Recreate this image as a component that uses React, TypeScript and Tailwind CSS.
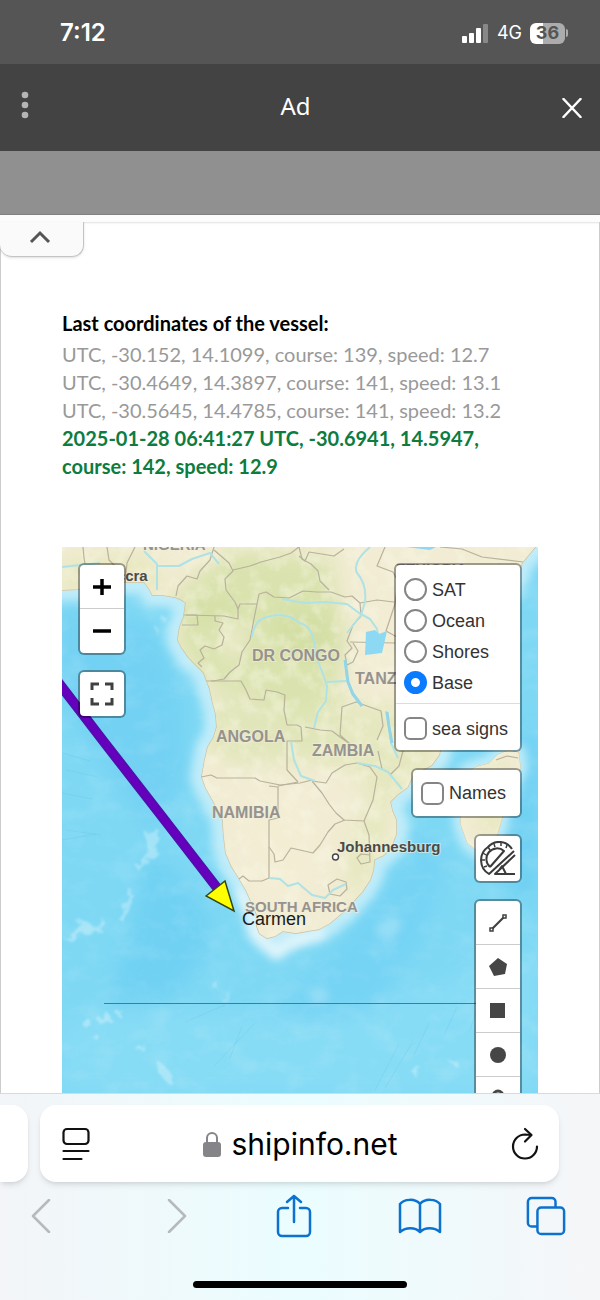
import React, { useState } from 'react';

interface VesselFix {
  time: string;
  lat: string;
  lon: string;
  course: number;
  speed: string;
}

const fixes: VesselFix[] = [
  { time: 'UTC', lat: '-30.152', lon: '14.1099', course: 139, speed: '12.7' },
  { time: 'UTC', lat: '-30.4649', lon: '14.3897', course: 141, speed: '13.1' },
  { time: 'UTC', lat: '-30.5645', lon: '14.4785', course: 141, speed: '13.2' },
  { time: '2025-01-28 06:41:27 UTC', lat: '-30.6941', lon: '14.5947', course: 142, speed: '12.9' },
];

const formatFix = (f: VesselFix) => `${f.time}, ${f.lat}, ${f.lon}, course: ${f.course}, speed: ${f.speed}`;

const baseLayers = ['SAT', 'Ocean', 'Shores', 'Base'];

const AFRICA =
  'M55 540 L55 591 L78 590 L100 586 L125 583 L144 583 L149 590 L152 596 L163 596 L175 598 L180 600 L185 603 L184 610 L183 617 L179 627 L177 640 L181 648 L188 658 L196 666 L203 673 L206 681 L209 689 L212 703 L215 714 L216 727 L213 737 L207 747 L204 760 L201 777 L205 788 L210 797 L216 808 L222 820 L223 836 L225 853 L231 867 L238 878 L245 890 L251 903 L257 917 L256 926 L259 934 L267 939 L275 937 L283 932 L296 934 L307 932 L319 930 L330 924 L342 914 L353 903 L363 892 L371 880 L374 870 L375 860 L384 856 L392 848 L397 834 L397 820 L393 811 L391 802 L398 795 L408 788 L414 775 L432 766 L440 755 L444 730 L440 710 L455 680 L490 630 L515 580 L523 563 L542 540 Z';
const MADAGASCAR =
  'M466 772 L477 766 L489 763 L498 754 L508 750 L519 752 L521 768 L514 782 L506 805 L501 824 L496 840 L487 850 L475 850 L467 843 L460 824 L462 800 Z';

const borders = [
  'M83 547 L84 558 L87 575 L88 589', 'M107 547 L109 560 L115 566 L117 583', 'M135 547 L127 563 L125 583',
  'M214 547 L210 560 L200 571 L197 579 L187 576 L178 586 L176 596',
  'M214 550 L221 556 L229 563 L233 571 L225 579 L226 590 L235 602 L238 609 L238 619 L224 616 L186 615',
  'M233 570 L250 566 L261 562 L280 557 L291 553 L299 547',
  'M238 609 L240 604 L257 604 L259 594 L266 592 L274 597 L289 598 L303 591 L317 592 L331 592 L345 597 L352 596 L360 603 L361 615',
  'M299 547 L302 559 L311 564 L318 571 L320 581 L329 590', 'M299 556 L305 561 L309 552 L334 556 L344 549',
  'M257 604 L254 619 L250 640 L242 652 L239 665 L230 672 L224 679 L213 681 L205 681',
  'M184 615 L197 615 L198 625 L182 625', 'M215 616 L215 621 L223 623 L219 630 L224 637 L222 645 L214 649 L205 646 L200 650 L204 658 L198 663 L202 667',
  'M211 681 L241 681 L246 690 L250 699 L264 700 L266 690 L277 692 L285 695 L284 710 L287 725 L297 725 L301 727 L302 741 L287 741 L287 770 L298 782',
  'M201 777 L211 775 L217 778 L255 778 L260 781 L280 785 L300 783 L312 780',
  'M269 786 L278 787 L278 818 L269 820 L269 878 M278 786 L298 782',
  'M312 781 L326 783 L332 773 L345 765 L357 763 L370 767 L377 777 L373 800 L364 821 L344 820 L336 813 L329 804 L322 793 L312 781',
  'M269 847 L274 854 L275 862 L283 860 L291 848 L313 853 L320 845 L328 832 L335 824 L345 820',
  'M239 879 L243 876 L249 881 L262 881 L269 878', 'M364 821 L369 835 L370 862 L361 864 L357 858 L361 854 L370 855',
  'M328 885 L337 879 L346 882 L347 889 L340 896 L330 894 Z', 'M305 727 L320 730 L332 731 L340 737 L350 744 L340 735 L342 707 L356 702 L367 706 L381 711 L383 726 L377 740',
  'M360 603 L377 600 L394 602 M361 616 L353 625 L347 641 L352 648 L345 655 L347 665 L353 662 L358 651 L353 643 M350 642 L395 643',
  'M385 547 L377 566 L393 572 L398 581 L395 604 L386 631 L397 637',
  'M440 547 L462 549 L482 557 L523 562', 'M496 760 L507 756 L518 758', 'M403 751 L399 766 L391 774 L382 769 L378 751',
];

const rivers = [
  'M62 567 L100 563 M144 551 L157 564 L157 590 M157 566 L179 566 L192 559 L210 553 L219 564',
  'M370 547 Q352 562 357 573 Q367 584 365 602 L361 615 L347 633',
  'M282 599 L305 603 L325 602 L347 604 L359 613 L370 619 L377 629 L379 640',
  'M252 637 Q254 620 267 617 Q285 611 300 623 Q315 627 315 654 L323 674 L327 686 L326 701 L318 712 L314 728 M327 682 L346 681',
  'M345 660 L347 679 L352 694 L362 706', 'M291 741 L294 760 L301 776 L315 781 M357 763 L375 766 L388 772 L402 789',
  'M269 878 L280 879 L288 886 L298 883 L312 895 L325 898 L333 890 L346 884', 'M386 711 L389 725 L391 743 L398 758',
];

const BaseMap: React.FC = () => (
  <svg viewBox="62 547 476 546" preserveAspectRatio="xMidYMin slice" className="absolute inset-0 h-full w-full" role="img" aria-label="Map of southern Africa">
    <defs>
      <clipPath id="land"><path d={AFRICA} /><path d={MADAGASCAR} /></clipPath>
      <filter id="soft" x="-30%" y="-30%" width="160%" height="160%"><feGaussianBlur stdDeviation="10" /></filter>
      <filter id="shelf" x="-20%" y="-20%" width="140%" height="140%"><feGaussianBlur stdDeviation="5" /></filter>
      <filter id="mount" x="-20%" y="-20%" width="140%" height="140%">
        <feTurbulence type="fractalNoise" baseFrequency="0.12" numOctaves="3" seed="5" result="n" />
        <feDisplacementMap in="SourceGraphic" in2="n" scale="12" />
        <feGaussianBlur stdDeviation="1" />
      </filter>
      <filter id="relief" x="0" y="0" width="100%" height="100%">
        <feTurbulence type="fractalNoise" baseFrequency="0.035 0.05" numOctaves="4" seed="8" />
        <feColorMatrix values="0 0 0 0 1  0 0 0 0 1  0 0 0 0 1  2.4 0 0 0 -1.1" />
      </filter>
      <filter id="veg" x="0" y="0" width="100%" height="100%">
        <feTurbulence type="fractalNoise" baseFrequency="0.06" numOctaves="4" seed="3" />
        <feColorMatrix values="0 0 0 0 .95  0 0 0 0 .94  0 0 0 0 .80  3 0 0 0 -1.3" />
      </filter>
    </defs>
    <rect x="62" y="547" width="476" height="546" fill="#7ed8f4" />
    <g filter="url(#soft)">
      <path d="M62 610 L150 625 L180 690 L185 780 L150 830 L62 700 Z" fill="#73d1f3" />
      <path d="M150 850 L205 900 L210 950 L170 1000 L110 1000 L130 930 Z" fill="#71d1f3" />
      <path d="M300 990 L395 880 L425 830 L445 860 L420 940 L350 1040 L250 1060 Z" fill="#74d3f4" />
      <path d="M62 1020 L190 1010 L330 1020 L538 950 L538 1093 L62 1093 Z" fill="#87dcf5" />
      <path d="M500 760 L538 720 L538 900 L510 900 Z" fill="#70d0f3" />
    </g>
    <g filter="url(#shelf)" stroke="#bfecf9" strokeLinejoin="round" fill="none">
      <path d={AFRICA} strokeWidth="22" /><path d={MADAGASCAR} strokeWidth="14" />
      <path d="M238 890 L262 942 L276 954 L292 943 L325 934" strokeWidth="12" stroke="#e0f5fb" />
    </g>
    <rect x="62" y="547" width="476" height="546" filter="url(#relief)" opacity=".1" />
    <g fill="#fff" opacity=".3" filter="url(#mount)">
      <path d="M147 835 l9 -8 l4 12 l-5 18 l-7 5 l-8 10 l-4 -5 l10 -13 Z" />
      <path d="M120 920 l8 -26 l5 -5 l-2 16 l-7 17 Z M64 940 l9 -8 l7 -12 l8 2 l9 8 l7 -11 l2 8 l-10 8 l-12 -3 l-10 8 Z" />
      <path d="M98 1018 l8 -6 l5 4 l-6 7 l-7 0 Z M82 1024 l5 -6 l5 2 l-6 8 Z M90 1036 l6 -4 l0 5 Z M115 1012 l8 -2 l-5 6 Z" />
      <path d="M135 1050 l10 -7 l-3 7 Z M155 1058 l10 8 l10 13 l-7 5 l-8 -10 Z M411 1072 l7 -7 l3 4 l-6 8 Z M450 1063 l7 -2 l3 8 Z" />
      <path d="M210 985 l8 -5 l-3 6 Z M222 1001 l10 -7 l-6 9 Z M161 621 l5 -4 l2 5 Z M152 634 l7 -5 l0 4 Z" />
    </g>
    <path d="M375 925 l16 -8 l12 4 l-5 12 l-18 8 Z M310 990 l14 -4 l6 14 l-16 6 Z" fill="#fff" opacity=".25" filter="url(#shelf)" />
    <g stroke="#60bfe0" strokeOpacity=".25" fill="none">
      <path d="M62 753 l28 8 M66 770 l32 7 M62 793 l30 6 M66 830 l35 5 M62 840 l34 -6 M185 1022 l40 -17 M215 1065 l40 -42 M230 1058 l12 -32 M375 1090 l24 -46 M385 1088 l27 -45 M414 1055 l15 -32 M444 1035 l13 -28 M470 1030 l8 -24" />
    </g>

    <g clipPath="url(#land)">
      <rect x="62" y="547" width="476" height="400" fill="#f1ecd3" />
      <g filter="url(#soft)">
        <path d="M178 590 L230 550 L330 556 L345 640 L330 740 L290 740 L260 700 L200 680 L175 640 Z" fill="#dae3af" />
        <path d="M212 690 L290 715 L350 700 L385 760 L360 770 L300 760 L240 765 L205 750 Z" fill="#e1e6ba" />
        <path d="M325 720 L380 700 L440 720 L430 770 L385 810 L390 850 L350 905 L345 850 L370 800 Z" fill="#e5e8bf" />
        <path d="M62 560 L150 556 L165 590 L62 590 Z M485 770 L510 760 L500 840 L480 840 Z" fill="#e6e7bd" />
        <path d="M270 610 L335 610 L338 660 L280 660 Z M182 600 L240 600 L232 618 L182 618 Z" fill="#d3dfa4" />
      </g>
      <g filter="url(#soft)" fill="#f3edd4">
        <path d="M228 625 L246 625 L238 655 L224 665 Z M360 640 L400 600 L400 690 L375 690 Z M235 800 L310 790 L320 850 L300 910 L250 900 Z" />
      </g>
      <rect x="62" y="547" width="476" height="400" filter="url(#veg)" opacity=".4" />
      <g fill="none" stroke="#b8b19c" strokeWidth="1.2" strokeLinejoin="round">{borders.map(d => <path key={d} d={d} />)}</g>
      <g fill="none" stroke="#aee2e4" strokeWidth="2" strokeLinejoin="round">{rivers.map(d => <path key={d} d={d} />)}</g>
      <path d="M366 632 l9 -2 l4 4 l8 -3 l-2 9 l-3 13 l-17 2 Z M436 547 l-6 3 l-24 -3 Z" fill="#8dd8f2" />
      <path d="M345 660 L348 682 L353 694 L362 706 M387 712 L389 727 L392 743" fill="none" stroke="#93d5e6" strokeWidth="3" />
      <path d={AFRICA} fill="none" stroke="#c6c2a8" strokeWidth="1.4" /><path d={MADAGASCAR} fill="none" stroke="#cbc8a8" />
    </g>

    <path d="M104 1003.500 H476" stroke="#2f84a3" />
    <g className="font-['Liberation_Sans',Arial,sans-serif]" fontWeight="700" fontSize="16" fill="#96938f" stroke="#f3eed8" strokeWidth="2" strokeOpacity=".6" paintOrder="stroke">
      <text x="143" y="550" fontSize="15">NIGERIA</text>
      <text x="396" y="574" fontSize="15">ETHIOPIA</text>
      <text x="252" y="661">DR CONGO</text>
      <text x="355" y="684">TANZANIA</text>
      <text x="216" y="742">ANGOLA</text>
      <text x="312" y="756">ZAMBIA</text>
      <text x="212" y="818">NAMIBIA</text>
      <text x="245" y="912" fontSize="15">SOUTH AFRICA</text>
      <text x="106" y="581" fontSize="15" fill="#4a4a4a">Accra</text>
      <text x="337" y="852" fontSize="15" fill="#4a4a4a">Johannesburg</text>
    </g>
    <circle cx="335.500" cy="857" r="3" fill="#fff" stroke="#444" strokeWidth="1.4" />
    <path d="M58 682 L104 742 L160 814 L218 889" fill="none" stroke="#4d11a8" strokeWidth="10" />
    <path d="M58 682 L104 742 L160 814 L218 889" fill="none" stroke="#6500bd" strokeWidth="7" />
    <path d="M206 896 L225 881 L234 911 Z" fill="#ff0" stroke="#344414" strokeWidth="1.5" />
    <text x="242" y="925" className="font-['Liberation_Sans',Arial,sans-serif]" fontSize="18" fill="#1a1a1a">Carmen</text>
  </svg>
);

const panel = 'overflow-hidden rounded-md border-2 border-black/35 bg-white bg-clip-padding';
const toolButton = 'flex h-11 w-11 items-center justify-center';

const MapControls: React.FC = () => {
  const [layer, setLayer] = useState('Base');
  const [seaSigns, setSeaSigns] = useState(false);
  const [names, setNames] = useState(false);
  const boxClass = 'h-[23px] w-[23px] shrink-0 appearance-none rounded-md border-2 border-[#858585] bg-white checked:bg-[#0a7aff]';

  return (
    <>
      <div className="absolute left-4 top-4 flex flex-col gap-[15px]">
        <div className={panel}>
          <button aria-label="Zoom in" className={`${toolButton} border-b border-[#ccc]`}>
            <svg width="18" height="18" viewBox="0 0 18 18" stroke="#000" strokeWidth="3.500"><path d="M9 1v16M0 9h18" /></svg>
          </button>
          <button aria-label="Zoom out" className={toolButton}>
            <svg width="18" height="18" viewBox="0 0 18 18" stroke="#000" strokeWidth="3.500"><path d="M0 9h18" /></svg>
          </button>
        </div>
        <div className={panel}>
          <button aria-label="Full screen" className={toolButton}>
            <svg width="24" height="24" viewBox="0 0 24 24" fill="none" stroke="#404040" strokeWidth="3"><path d="M2 8V2h7M15 2h7v6M22 16v6h-7M9 22H2v-6" /></svg>
          </button>
        </div>
      </div>

      <div className="absolute right-4 top-4 flex flex-col items-end gap-4 font-['Liberation_Sans',Arial,sans-serif] text-lg text-[#333]">
        <form className={`${panel} w-32 pt-[9px] pb-1.5`}>
          {baseLayers.map(name => (
            <label key={name} className="flex h-[31px] items-center gap-[5px] px-2">
              <input type="radio" name="layer" checked={layer === name} onChange={() => setLayer(name)} className="h-[23px] w-[23px] shrink-0 appearance-none rounded-full border-2 border-[#858585] bg-white checked:border-[7px] checked:border-[#0a7aff]" />
              {name}
            </label>
          ))}
          <div className="mt-[5px] mb-[9px] border-t border-[#ddd]" />
          <label className="flex h-[31px] items-center gap-[5px] px-2 whitespace-nowrap">
            <input type="checkbox" checked={seaSigns} onChange={() => setSeaSigns(!seaSigns)} className={boxClass} />
            sea signs
          </label>
        </form>
        <label className={`${panel} flex h-[50px] items-center gap-[5px] px-2 pr-3.5`}>
          <input type="checkbox" checked={names} onChange={() => setNames(!names)} className={boxClass} />
          Names
        </label>
        <div className={panel}>
          <button aria-label="Measure angle" className="flex h-[45px] w-11 items-center justify-center">
            <svg width="36" height="36" viewBox="0 0 36 36" fill="none" stroke="#3b3b3b" strokeWidth="2" strokeLinejoin="round">
              <path d="M32 8A15 15 0 0 0 8 6A16 16 0 0 0 9 33L34 10" />
              <path d="M10 26A10 10 0 0 1 24 10L10 26" />
              <path d="M2 19h3M3 12l3 2M8 6l2 3M14 3l1 3M21 2v3M27 4l-1 3M4 26l3-1" strokeWidth="1.500" />
              <path d="M35 33H15L35 14M19 29l3-4 4 8" />
            </svg>
          </button>
        </div>
        <div className={panel}>
          <button aria-label="Draw line" className={`${toolButton} border-b border-[#ccc]`}>
            <svg width="18" height="18" viewBox="0 0 18 18" fill="#fff" stroke="#404040"><path d="M3 15L15 3" strokeWidth="2.200" /><path d="M1 14h3v3H1zM14 1h3v3h-3z" strokeWidth="1.500" /></svg>
          </button>
          <button aria-label="Draw polygon" className={`${toolButton} border-b border-[#ccc]`}>
            <svg width="18" height="18" viewBox="0 0 18 18" fill="#464646"><path d="M9 0L18 6L16 16L5 18L0 8Z" /></svg>
          </button>
          <button aria-label="Draw rectangle" className={`${toolButton} border-b border-[#ccc]`}>
            <svg width="16" height="16" viewBox="0 0 16 16" fill="#464646"><path d="M0 0h15v15H0z" /></svg>
          </button>
          <button aria-label="Draw circle" className={`${toolButton} border-b border-[#ccc]`}>
            <svg width="16" height="16" viewBox="0 0 16 16" fill="#464646"><circle cx="8" cy="8" r="8" /></svg>
          </button>
          <button aria-label="Draw marker" className={toolButton}>
            <svg width="16" height="20" viewBox="0 0 16 20" fill="none" stroke="#464646" strokeWidth="2.800"><path d="M8 18C5 13 3 11 3 7a5 5 0 0 1 10 0c0 4-2 6-5 11Z" /></svg>
          </button>
        </div>
      </div>
    </>
  );
};

const StatusBar: React.FC = () => (
  <div className="flex h-16 shrink-0 items-center justify-between bg-[#555] pl-[60px] pr-8 pt-0.5 font-['Inter',sans-serif] text-white">
    <span className="text-2xl font-semibold">7:12</span>
    <div className="flex items-center gap-2">
      <svg width="27" height="19" viewBox="0 0 27 19" fill="#fff">
        <rect x="0" y="12" width="5" height="7" rx="1" /><rect x="7" y="9" width="5" height="10" rx="1" />
        <rect x="14" y="4" width="5" height="15" rx="1" /><rect x="21" y="0" width="5" height="19" rx="1" opacity=".3" />
      </svg>
      <span className="text-lg">4G</span>
      <div className="flex items-center gap-px">
        <span className="flex h-[21px] w-[35px] items-center justify-center rounded-md bg-linear-to-r from-white from-38% to-[#acacac] to-38% text-lg font-bold text-[#555]">36</span>
        <span className="h-2 w-0.5 rounded-r bg-[#acacac]" />
      </div>
    </div>
  </div>
);

const BrowserBar: React.FC = () => (
  <footer className="flex shrink-0 flex-col border-t border-[#d5dcdd] bg-linear-to-r from-[#f3f5f8] via-[#ebfdff] to-[#f5f6f8] pt-[11px] pb-3">
    <div className="flex gap-3 pr-[41px]">
      <div className="h-[77px] w-[28px] shrink-0 rounded-r-2xl bg-white shadow-md" />
      <div className="flex h-[77px] flex-1 items-center justify-between rounded-2xl bg-white pl-[22px] pr-5 shadow-md">
        <button aria-label="Page menu">
          <svg width="28" height="34" viewBox="0 0 28 34" fill="none" stroke="#111" strokeWidth="2.200" strokeLinecap="round"><rect x="1.500" y="2" width="25" height="15" rx="3.500" /><path d="M1.500 24h25M1.500 32h18" /></svg>
        </button>
        <button className="flex items-center gap-2.5 font-['Inter',sans-serif] text-3xl text-black">
          <svg width="18" height="26" viewBox="0 0 18 26"><rect y="11" width="18" height="15" rx="3" fill="#858589" /><path d="M4 12V7a5 5 0 0 1 10 0v5" fill="none" stroke="#858589" strokeWidth="2" /></svg>
          shipinfo.net
        </button>
        <button aria-label="Reload">
          <svg width="28" height="34" viewBox="0 0 28 34" fill="none" stroke="#111" strokeWidth="2.200" strokeLinecap="round" strokeLinejoin="round"><path d="M26 19.500A12 12 0 1 1 14 7.500L20 8" /><path d="M14 2L20.500 8L14 14.500" /></svg>
        </button>
      </div>
    </div>
    <nav className="mt-3 flex items-center justify-between pl-[21px] pr-[34px] text-[#0b72d0]">
      <button aria-label="Back" className="flex w-10 justify-center text-[#b7babd]">
        <svg width="20" height="34" viewBox="0 0 20 34" fill="none" stroke="currentColor" strokeWidth="2.500" strokeLinecap="round" strokeLinejoin="round"><path d="M18 1L2 17l16 16" /></svg>
      </button>
      <button aria-label="Forward" className="flex w-10 justify-end text-[#b7babd]">
        <svg width="20" height="34" viewBox="0 0 20 34" fill="none" stroke="currentColor" strokeWidth="2.500" strokeLinecap="round" strokeLinejoin="round"><path d="M2 1l16 16L2 33" /></svg>
      </button>
      <button aria-label="Share" className="flex w-10 justify-center">
        <svg width="36" height="44" viewBox="0 0 36 44" fill="none" stroke="currentColor" strokeWidth="2.500" strokeLinecap="round" strokeLinejoin="round"><path d="M12 14H6a4 4 0 0 0-4 4v20a4 4 0 0 0 4 4h24a4 4 0 0 0 4-4V18a4 4 0 0 0-4-4h-6M18 28V2M11 8l7-6 7 6" /></svg>
      </button>
      <button aria-label="Bookmarks" className="flex w-10 justify-center">
        <svg width="44" height="36" viewBox="0 0 44 36" className="shrink-0" fill="none" stroke="currentColor" strokeWidth="2.500" strokeLinejoin="round"><path d="M22 6C17 0 6 1 2 6v28c6-5 15-5 20 0 5-5 14-5 20 0V6C38 1 27 0 22 6v28" /></svg>
      </button>
      <button aria-label="Tabs" className="flex w-10 justify-center">
        <svg width="40" height="40" viewBox="-1 -1 42 42" fill="none" stroke="currentColor" strokeWidth="2.600"><rect x="11" y="11" width="28" height="28" rx="4" /><path d="M11 31H5a4 4 0 0 1-4-4V5a4 4 0 0 1 4-4h21a4 4 0 0 1 4 4v6" /></svg>
      </button>
    </nav>
    <div className="mx-auto mt-[43px] h-[7px] w-[214px] rounded-full bg-black" />
  </footer>
);

export default function App() {
  return (
    <div className="flex h-screen flex-col overflow-hidden bg-white">
      <StatusBar />
      <header className="flex h-[87px] shrink-0 items-center justify-between bg-[#434343] pl-[21px] pr-[18px] text-white">
        <button aria-label="More options" className="w-2 pb-1.5">
          <svg width="8" height="28" viewBox="0 0 8 28" fill="#b5b5b5"><circle cx="4" cy="4" r="3.300" /><circle cx="4" cy="14" r="3.300" /><circle cx="4" cy="24" r="3.300" /></svg>
        </button>
        <h1 className="pb-1 font-['Noto_Sans',sans-serif] text-2xl">Ad</h1>
        <button aria-label="Close">
          <svg width="20" height="20" viewBox="0 0 20 20" stroke="#fff" strokeWidth="2.500" strokeLinecap="round"><path d="M1.500 1l17 18M18.500 1l-17 18" /></svg>
        </button>
      </header>
      <div className="h-16 shrink-0 border-b border-[#828282] bg-[#909090]" />

      <div className="h-[7px] shrink-0 bg-[#fcfcfc] shadow-[0_1px_2px_rgba(0,0,0,0.12)]" />
      <main className="flex min-h-0 flex-1 flex-col border-x border-[#ccc]">
        <button aria-label="Collapse ad" className="-ml-px flex h-[35px] w-[84px] shrink-0 items-center justify-center rounded-b-xl border-r border-b border-[#c4c4c4] bg-[#fafafa] pr-1 pb-1 shadow-sm">
          <svg width="22" height="14" viewBox="0 0 22 14" fill="none" stroke="#555" strokeWidth="3"><path d="M2 12L11 3l9 9" /></svg>
        </button>
        <div className="flex min-h-0 flex-1 flex-col px-[61px] pt-[52px]">
          <section className="font-['Lato',sans-serif] text-xl leading-7">
            <h2 className="font-bold text-black">Last coordinates of the vessel:</h2>
            <ul className="mt-[3px] text-[#999]">
              {fixes.map((fix, i) => (
                <li key={fix.lat} className={i === fixes.length - 1 ? 'font-bold text-[#0d7c3f]' : ''}>{formatFix(fix)}</li>
              ))}
            </ul>
          </section>
          <section className="relative mt-[67px] min-h-0 flex-1 overflow-hidden">
            <BaseMap />
            <MapControls />
          </section>
        </div>
      </main>
      <BrowserBar />
    </div>
  );
}
